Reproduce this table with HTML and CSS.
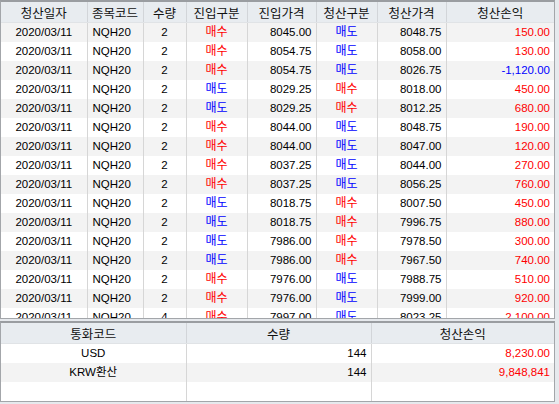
FILE: index.html
```html
<!DOCTYPE html>
<html lang="ko">
<head>
<meta charset="utf-8">
<link rel="stylesheet" href="styles.css">
</head>
<body>
<div class="screen">
  <div class="panel main">
    <table class="grid">
      <colgroup>
        <col class="c1"><col class="c2"><col class="c3"><col class="c4"><col class="c5"><col class="c6"><col class="c7"><col class="c8">
      </colgroup>
      <thead>
        <tr><th>청산일자</th><th>종목코드</th><th>수량</th><th>진입구분</th><th>진입가격</th><th>청산구분</th><th>청산가격</th><th>청산손익</th></tr>
      </thead>
      <tbody>
        <tr><td class="ctr">2020/03/11</td><td class="lft">NQH20</td><td class="ctr">2</td><td class="ctr buy">매수</td><td class="rgt">8045.00</td><td class="ctr sell">매도</td><td class="rgt">8048.75</td><td class="rgt pl pos">150.00</td></tr>
        <tr><td class="ctr">2020/03/11</td><td class="lft">NQH20</td><td class="ctr">2</td><td class="ctr buy">매수</td><td class="rgt">8054.75</td><td class="ctr sell">매도</td><td class="rgt">8058.00</td><td class="rgt pl pos">130.00</td></tr>
        <tr><td class="ctr">2020/03/11</td><td class="lft">NQH20</td><td class="ctr">2</td><td class="ctr buy">매수</td><td class="rgt">8054.75</td><td class="ctr sell">매도</td><td class="rgt">8026.75</td><td class="rgt pl neg">-1,120.00</td></tr>
        <tr><td class="ctr">2020/03/11</td><td class="lft">NQH20</td><td class="ctr">2</td><td class="ctr sell">매도</td><td class="rgt">8029.25</td><td class="ctr buy">매수</td><td class="rgt">8018.00</td><td class="rgt pl pos">450.00</td></tr>
        <tr><td class="ctr">2020/03/11</td><td class="lft">NQH20</td><td class="ctr">2</td><td class="ctr sell">매도</td><td class="rgt">8029.25</td><td class="ctr buy">매수</td><td class="rgt">8012.25</td><td class="rgt pl pos">680.00</td></tr>
        <tr><td class="ctr">2020/03/11</td><td class="lft">NQH20</td><td class="ctr">2</td><td class="ctr buy">매수</td><td class="rgt">8044.00</td><td class="ctr sell">매도</td><td class="rgt">8048.75</td><td class="rgt pl pos">190.00</td></tr>
        <tr><td class="ctr">2020/03/11</td><td class="lft">NQH20</td><td class="ctr">2</td><td class="ctr buy">매수</td><td class="rgt">8044.00</td><td class="ctr sell">매도</td><td class="rgt">8047.00</td><td class="rgt pl pos">120.00</td></tr>
        <tr><td class="ctr">2020/03/11</td><td class="lft">NQH20</td><td class="ctr">2</td><td class="ctr buy">매수</td><td class="rgt">8037.25</td><td class="ctr sell">매도</td><td class="rgt">8044.00</td><td class="rgt pl pos">270.00</td></tr>
        <tr><td class="ctr">2020/03/11</td><td class="lft">NQH20</td><td class="ctr">2</td><td class="ctr buy">매수</td><td class="rgt">8037.25</td><td class="ctr sell">매도</td><td class="rgt">8056.25</td><td class="rgt pl pos">760.00</td></tr>
        <tr><td class="ctr">2020/03/11</td><td class="lft">NQH20</td><td class="ctr">2</td><td class="ctr sell">매도</td><td class="rgt">8018.75</td><td class="ctr buy">매수</td><td class="rgt">8007.50</td><td class="rgt pl pos">450.00</td></tr>
        <tr><td class="ctr">2020/03/11</td><td class="lft">NQH20</td><td class="ctr">2</td><td class="ctr sell">매도</td><td class="rgt">8018.75</td><td class="ctr buy">매수</td><td class="rgt">7996.75</td><td class="rgt pl pos">880.00</td></tr>
        <tr><td class="ctr">2020/03/11</td><td class="lft">NQH20</td><td class="ctr">2</td><td class="ctr sell">매도</td><td class="rgt">7986.00</td><td class="ctr buy">매수</td><td class="rgt">7978.50</td><td class="rgt pl pos">300.00</td></tr>
        <tr><td class="ctr">2020/03/11</td><td class="lft">NQH20</td><td class="ctr">2</td><td class="ctr sell">매도</td><td class="rgt">7986.00</td><td class="ctr buy">매수</td><td class="rgt">7967.50</td><td class="rgt pl pos">740.00</td></tr>
        <tr><td class="ctr">2020/03/11</td><td class="lft">NQH20</td><td class="ctr">2</td><td class="ctr buy">매수</td><td class="rgt">7976.00</td><td class="ctr sell">매도</td><td class="rgt">7988.75</td><td class="rgt pl pos">510.00</td></tr>
        <tr><td class="ctr">2020/03/11</td><td class="lft">NQH20</td><td class="ctr">2</td><td class="ctr buy">매수</td><td class="rgt">7976.00</td><td class="ctr sell">매도</td><td class="rgt">7999.00</td><td class="rgt pl pos">920.00</td></tr>
        <tr><td class="ctr">2020/03/11</td><td class="lft">NQH20</td><td class="ctr">4</td><td class="ctr buy">매수</td><td class="rgt">7997.00</td><td class="ctr sell">매도</td><td class="rgt">8023.25</td><td class="rgt pl pos">2,100.00</td></tr>
      </tbody>
    </table>
  </div>
  <div class="panel summary">
    <table class="grid">
      <colgroup>
        <col class="s1"><col class="s2"><col class="s3">
      </colgroup>
      <thead>
        <tr><th>통화코드</th><th>수량</th><th>청산손익</th></tr>
      </thead>
      <tbody>
        <tr><td class="ctr">USD</td><td class="rgt">144</td><td class="rgt pl pos">8,230.00</td></tr>
        <tr><td class="ctr">KRW환산</td><td class="rgt">144</td><td class="rgt pl pos">9,848,841</td></tr>
        <tr><td></td><td></td><td></td></tr>
      </tbody>
    </table>
  </div>
</div>
</body>
</html>
```

FILE: styles.css
```css
html, body {
  margin: 0;
  padding: 0;
  background: #e6e9ed;
}
body {
  width: 559px;
  height: 404px;
  overflow: hidden;
  font-family: "Liberation Sans", "Noto Sans CJK KR", sans-serif;
  color: #000;
}
.screen {
  display: flex;
  flex-direction: column;
  gap: 2px;
  width: 555px;
}
.panel {
  background: #fff;
  border: 1px solid #a3a6aa;
  border-top: 2px solid #9a9da1;
  overflow: hidden;
}
.main {
  height: 316px;
}
.summary {
  height: 78px;
}
.grid {
  border-collapse: collapse;
  table-layout: fixed;
  width: 100%;
}
.c1 { width: 86px; }
.c2 { width: 56px; }
.c3 { width: 43px; }
.c4 { width: 61px; }
.c5 { width: 69px; }
.c6 { width: 61px; }
.c7 { width: 69px; }
.c8 { width: auto; }
.s1 { width: 185px; }
.s2 { width: 185px; }
.s3 { width: auto; }
.grid th {
  height: 20px;
  padding: 0;
  background: #e8ecf0;
  font-weight: normal;
  font-size: 12.5px;
  color: #111;
  border-right: 1px solid #d2d5d9;
  border-bottom: 1px solid #e0e3e6;
  white-space: nowrap;
  overflow: hidden;
}
.grid td {
  height: 19px;
  padding: 0;
  font-size: 11.5px;
  line-height: 19px;
  border-right: 1px solid #d6d6d6;
  white-space: nowrap;
  overflow: hidden;
}
.grid tbody tr:nth-child(odd) td {
  background: #f3f3f3;
}
.summary .grid tbody tr:nth-child(odd) td {
  background: #fff;
}
.summary .grid tbody tr:nth-child(even) td {
  background: #f3f3f3;
}
.grid th:last-child,
.grid td:last-child {
  border-right: none;
}
.ctr { text-align: center; }
.lft { text-align: left; padding-left: 5px !important; }
.rgt { text-align: right; padding-right: 4px !important; }
.pl { padding-right: 4px !important; }
.buy { color: #ff0000; font-size: 12px !important; }
.sell { color: #0000ff; font-size: 12px !important; }
.pos { color: #ff0000; }
.neg { color: #0000ff; }
```
